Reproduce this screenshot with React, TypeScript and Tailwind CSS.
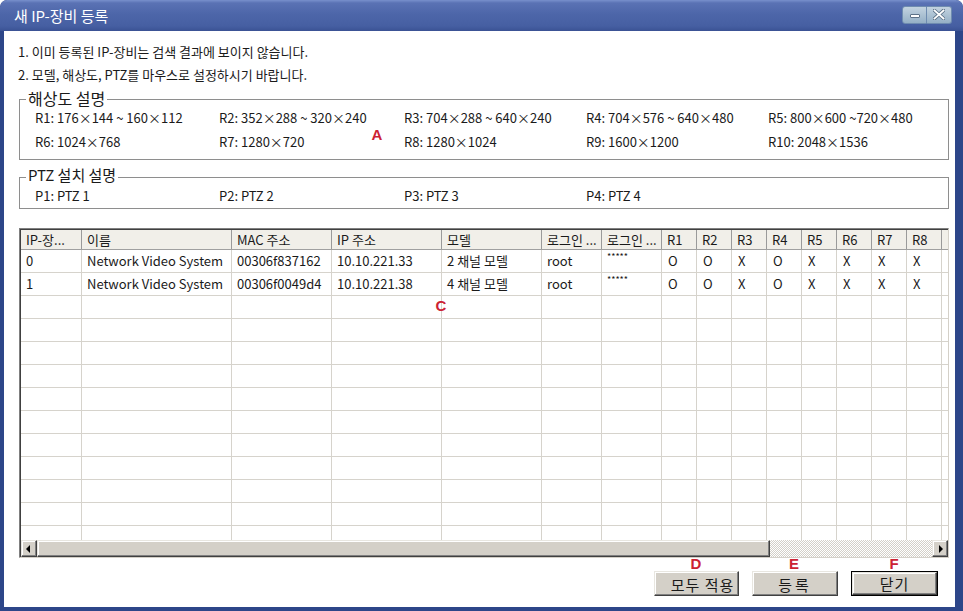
import React from "react";

const KR = "font-['Noto_Sans_CJK_KR',sans-serif]";

const RES_ROWS = [
  ["R1: 176×144 ~ 160×112", "R2: 352×288 ~ 320×240", "R3: 704×288 ~ 640×240", "R4: 704×576 ~ 640×480", "R5: 800×600 ~720×480"],
  ["R6: 1024×768", "R7: 1280×720", "R8: 1280×1024", "R9: 1600×1200", "R10: 2048×1536"],
];

const PTZ = ["P1: PTZ 1", "P2: PTZ 2", "P3: PTZ 3", "P4: PTZ 4"];

const COLS = [
  { label: "IP-장...", w: "w-[61px]" },
  { label: "이름", w: "w-[150px]" },
  { label: "MAC 주소", w: "w-[100px]" },
  { label: "IP 주소", w: "w-[110px]" },
  { label: "모델", w: "w-[100px]" },
  { label: "로그인 ...", w: "w-[60px]" },
  { label: "로그인 ...", w: "w-[60px]" },
  { label: "R1", w: "w-[35px]" },
  { label: "R2", w: "w-[35px]" },
  { label: "R3", w: "w-[35px]" },
  { label: "R4", w: "w-[35px]" },
  { label: "R5", w: "w-[35px]" },
  { label: "R6", w: "w-[35px]" },
  { label: "R7", w: "w-[35px]" },
  { label: "R8", w: "w-[35px]" },
  { label: "", w: "w-[35px]" },
];

const ROWS = [
  ["0", "Network Video System", "00306f837162", "10.10.221.33", "2 채널 모델", "root", "*****", "O", "O", "X", "O", "X", "X", "X", "X", ""],
  ["1", "Network Video System", "00306f0049d4", "10.10.221.38", "4 채널 모델", "root", "*****", "O", "O", "X", "O", "X", "X", "X", "X", ""],
];

const raised =
  "border border-t-[#e8e6e0] border-l-[#e8e6e0] border-b-[#404040] border-r-[#404040] shadow-[inset_-1px_-1px_#808080,inset_1px_1px_#ffffff] bg-[#d4d0c8]";

function Tag({ ch, x, y }: { ch: string; x: string; y: string }) {
  return (
    <span
      className={`absolute ${x} ${y} -translate-x-1/2 text-[15px] leading-[14px] font-bold text-[#cc2233] font-['Liberation_Sans',sans-serif]`}
    >
      {ch}
    </span>
  );
}

function Arrow({ dir }: { dir: "l" | "r" }) {
  return (
    <svg width="8" height="8" viewBox="0 0 8 8">
      {dir === "l" ? <path d="M5 0 L1 4 L5 8 Z" fill="#000" /> : <path d="M3 0 L7 4 L3 8 Z" fill="#000" />}
    </svg>
  );
}

export default function App() {
  return (
    <div className={`w-[963px] h-[611px] bg-[#2d4689] rounded-t-[7px] flex flex-col overflow-hidden ${KR}`}>
      {/* title bar */}
      <div className="h-[31px] flex items-center justify-between pl-[14px] pr-[11px] bg-[linear-gradient(#7890cc_0px,#5a72b4_3px,#4d66a9_14px,#465fa2_26px,#3a5294_31px)] rounded-t-[7px]">
        <span className="text-white text-[15px] leading-[16px] mt-[1px]">새 IP-장비 등록</span>
        <div className="flex mt-[-2px]">
          <div className="w-[25px] h-[18px] rounded-l-[3px] bg-[linear-gradient(#c3d3e0,#95b0c6)] border border-[#6f8cb0] flex items-center justify-center">
            <div className="w-[10px] h-[4px] bg-white border border-[#5d7288] rounded-[1px] mt-[3px]" />
          </div>
          <div className="w-[25px] h-[18px] rounded-r-[3px] bg-[linear-gradient(#c3d3e0,#95b0c6)] border border-l-0 border-[#6f8cb0] flex items-center justify-center">
            <svg width="12" height="11" viewBox="0 0 12 11">
              <path d="M1.5 1.5 L10.5 9.5 M10.5 1.5 L1.5 9.5" stroke="#5d7288" strokeWidth="3.6" strokeLinecap="square" />
              <path d="M1.5 1.5 L10.5 9.5 M10.5 1.5 L1.5 9.5" stroke="#ffffff" strokeWidth="1.8" strokeLinecap="square" />
            </svg>
          </div>
        </div>
      </div>

      {/* client */}
      <div className="relative flex-1 bg-white ml-[4px] mr-[8px] mb-[4px] flex flex-col pt-[13px] text-[13px] text-[#1a1a1a]">
        <p className="pl-[14px] leading-[16px]">1. 이미 등록된 IP-장비는 검색 결과에 보이지 않습니다.</p>
        <p className="pl-[14px] leading-[16px] mt-[7px]">2. 모델, 해상도, PTZ를 마우스로 설정하시기 바랍니다.</p>

        {/* 해상도 설명 */}
        <div className="relative ml-[15px] mr-[6px] mt-[16px] h-[61px] border border-[#8e8e8e] pt-[10px] pl-[15px]">
          <span className="absolute -top-[10px] left-[6px] bg-white px-[2px] text-[16px] leading-[16px]">해상도 설명</span>
          <div className="grid grid-cols-[184px_185px_182px_182px_1fr] gap-y-[8px] leading-[16px]">
            {RES_ROWS.flat().map((t, i) => (
              <span key={i}>{t}</span>
            ))}
          </div>
        </div>

        {/* PTZ 설치 설명 */}
        <div className="relative ml-[15px] mr-[6px] mt-[17px] h-[32px] border border-[#8e8e8e] pt-[10px] pl-[15px]">
          <span className="absolute -top-[11px] left-[6px] bg-white px-[2px] text-[15px] leading-[16px]">PTZ 설치 설명</span>
          <div className="grid grid-cols-[184px_185px_182px_182px_1fr] leading-[16px]">
            {PTZ.map((t) => (
              <span key={t}>{t}</span>
            ))}
          </div>
        </div>

        {/* list view */}
        <div className="ml-[15px] mr-[6px] mt-[19px] h-[330px] border border-t-[#808080] border-l-[#808080] border-b-[#d4d0c8] border-r-[#d4d0c8] flex flex-col overflow-hidden">
          <div className="flex-1 border-t border-l border-[#404040] flex flex-col overflow-hidden">
            <div className="flex h-[20px] shrink-0 bg-[#f1efe9] border-b border-[#a0a0a0] overflow-hidden">
              {COLS.map((c, i) => (
                <div
                  key={i}
                  className={`${c.w} shrink-0 h-full border-r border-[#9a9a9a] pl-[5px] leading-[20px] whitespace-nowrap overflow-hidden`}
                >
                  {c.label}
                </div>
              ))}
            </div>
            <div className="flex-1 overflow-hidden">
              {Array.from({ length: 13 }).map((_, r) => (
                <div key={r} className="flex h-[23px] border-b border-[#d6d3cc]">
                  {COLS.map((c, i) => {
                    const v = ROWS[r]?.[i] ?? "";
                    return (
                      <div
                        key={i}
                        className={`${c.w} shrink-0 h-full border-r border-[#d6d3cc] whitespace-nowrap overflow-hidden ${
                          v === "*****" ? "text-[9px] leading-[12px] pt-[1px]" : "leading-[22px]"
                        } ${i >= 7 ? "pl-[6px]" : "pl-[5px]"}`}
                      >
                        {v}
                      </div>
                    );
                  })}
                </div>
              ))}
            </div>
            {/* horizontal scrollbar */}
            <div className="flex h-[17px] shrink-0">
              <div className={`w-[16px] h-full flex items-center justify-center ${raised}`}>
                <Arrow dir="l" />
              </div>
              <div className={`w-[733px] h-full ${raised}`} />
              <div className="flex-1 h-full bg-[repeating-conic-gradient(#d4d0c8_0_25%,#ffffff_0_50%)] bg-[length:2px_2px]" />
              <div className={`w-[16px] h-full flex items-center justify-center ${raised}`}>
                <Arrow dir="r" />
              </div>
            </div>
          </div>
        </div>

        {/* buttons */}
        <div className="flex justify-end gap-[13px] pr-[17px] mt-[13px]">
          <button className={`w-[85px] h-[25px] text-[15px] leading-[20px] tracking-[1px] pl-[12px] pt-[2px] ${raised}`}>모두 적용</button>
          <button className={`w-[86px] h-[25px] text-[15px] leading-[20px] tracking-[3px] pt-[2px] ${raised}`}>등록</button>
          <div className="w-[87px] h-[25px] border border-black">
            <button className={`w-full h-full text-[15px] leading-[20px] tracking-[1px] pt-[1px] ${raised}`}>닫기</button>
          </div>
        </div>

        <Tag ch="A" x="left-[373px]" y="top-[97px]" />
        <Tag ch="C" x="left-[437px]" y="top-[268px]" />
        <Tag ch="D" x="left-[692px]" y="top-[526px]" />
        <Tag ch="E" x="left-[790px]" y="top-[526px]" />
        <Tag ch="F" x="left-[890px]" y="top-[526px]" />
      </div>
    </div>
  );
}
